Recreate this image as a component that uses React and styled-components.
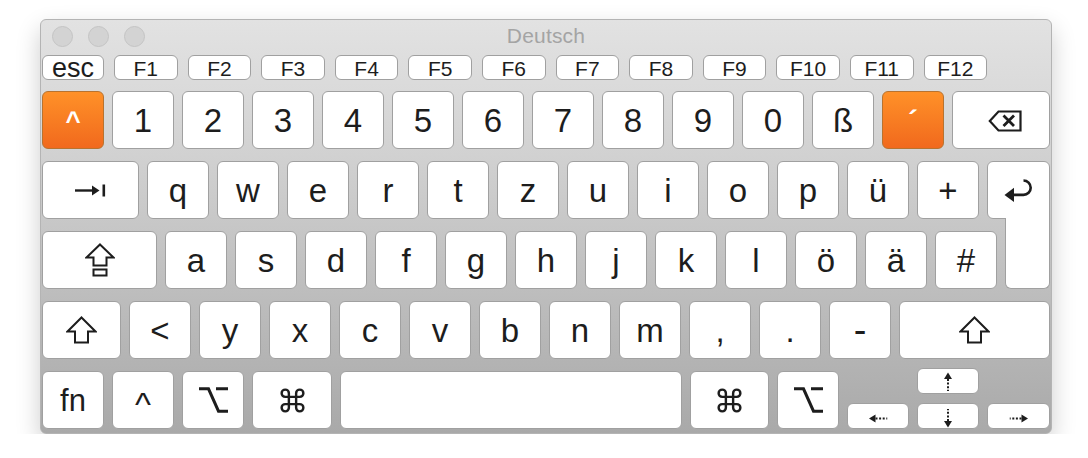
import React from 'react'
import styled, { createGlobalStyle } from 'styled-components'

const GlobalStyle = createGlobalStyle`
  body {
    margin: 0;
    background: #fff;
    font-family: "Liberation Sans", Arial, sans-serif;
  }
`

const Window = styled.div`
  margin: 19px 0 0 40px;
  width: 1012px;
  height: 415px;
  box-sizing: border-box;
  border: 1px solid #b4b4b4;
  border-radius: 6px;
  background: linear-gradient(#e2e2e2 0, #d9d9d9 80px, #a9a9a9 100%);
  box-shadow: 0 10px 24px rgba(0, 0, 0, 0.2);
`

const TitleBar = styled.div`
  height: 35px;
  box-sizing: border-box;
  padding-bottom: 3px;
  display: grid;
  grid-template-columns: 1fr auto 1fr;
  align-items: center;
`

const Lights = styled.div`
  display: flex;
  gap: 15px;
  padding-left: 11px;
`

const Light = styled.span`
  width: 21px;
  height: 21px;
  box-sizing: border-box;
  border-radius: 50%;
  background: #d3d3d3;
  border: 1px solid #c4c4c4;
`

const Title = styled.div`
  font-size: 21px;
  color: #a4a4a4;
  letter-spacing: 0.2px;
`

const Board = styled.div`
  padding: 0 1px;
  display: flex;
  flex-direction: column;
  gap: 12px;
`

const FRow = styled.div`
  display: flex;
  gap: 10px;
  height: 25px;
  margin-bottom: -1px;
`

const Row = styled.div`
  display: flex;
  gap: 8px;
  height: 58px;
`

const Key = styled.div`
  flex: 0 0 ${p => p.$w || 62}px;
  box-sizing: border-box;
  display: flex;
  align-items: center;
  justify-content: center;
  padding-top: ${p => p.$pt || 0}px;
  background: #fff;
  border: 1px solid #a0a0a0;
  border-radius: 6px;
  font-size: ${p => p.$fs || 33}px;
  line-height: 1;
  color: #1d1d1d;
`

const FKey = styled(Key)`
  padding-top: 1px;
`

const AccentKey = styled(Key)`
  background: linear-gradient(#ff9128, #f1691d);
  border-color: #b8732f;
  color: #fff;
  font-weight: bold;
`

const ReturnKey = styled(Key)`
  border-bottom-right-radius: 0;
`

const ReturnTail = styled.div`
  flex: 0 0 45px;
  box-sizing: border-box;
  height: 71px;
  margin-top: -13px;
  background: #fff;
  border: 1px solid #a0a0a0;
  border-top: none;
  border-radius: 0 0 6px 6px;
  position: relative;
  z-index: 1;
`

const Arrows = styled.div`
  flex: 0 0 203px;
  align-self: flex-end;
  height: 61px;
  display: grid;
  grid-template-columns: 62px 62px 63px;
  grid-template-rows: 26px 26px;
  column-gap: 8px;
  row-gap: 9px;
`

const ArrowKey = styled(Key)`
  grid-column: ${p => p.$col};
  grid-row: ${p => p.$row};
`

const ink = '#1d1d1d'

const BackspaceIcon = () => (
  <svg width="34" height="22" viewBox="0 0 34 22">
    <path d="M10.5 1.5H32.5V20.5H10.5L1.8 11Z" fill="none" stroke={ink} strokeWidth="2.2" strokeLinejoin="miter" />
    <path d="M15.5 5.5L26 16M26 5.5L15.5 16" stroke={ink} strokeWidth="2.8" />
  </svg>
)

const TabIcon = () => (
  <svg width="31" height="13" viewBox="0 0 31 13">
    <path d="M0 6.5H20" stroke={ink} strokeWidth="2.4" />
    <path d="M17 1.5L24.5 6.5L17 11.5Z" fill={ink} />
    <rect x="27.5" y="0.5" width="2.6" height="12" fill={ink} />
  </svg>
)

const CapsIcon = () => (
  <svg width="30" height="34" viewBox="0 0 30 34">
    <path d="M15 1.5L28.5 14.5H21.5V22.5H8.5V14.5H1.5Z" fill="none" stroke={ink} strokeWidth="2" strokeLinejoin="miter" />
    <rect x="8.5" y="26.5" width="13" height="6" fill="none" stroke={ink} strokeWidth="2" />
  </svg>
)

const ShiftIcon = () => (
  <svg width="31" height="28" viewBox="0 0 31 28">
    <path d="M15.5 1.5L29.5 15.5H22V26.5H9V15.5H1.5Z" fill="none" stroke={ink} strokeWidth="2" strokeLinejoin="miter" />
  </svg>
)

const ReturnIcon = () => (
  <svg width="30" height="24" viewBox="0 0 30 24">
    <path d="M19.5 2.5A7.2 7.2 0 0 1 19.5 16.9H8" fill="none" stroke={ink} strokeWidth="2.6" />
    <path d="M0.5 16.9L10 9.8V24Z" fill={ink} />
  </svg>
)

const OptionIcon = () => (
  <svg width="31" height="28" viewBox="0 0 31 28">
    <path d="M1 2.8H10.5L20.5 25.2H30M18 2.8H30" fill="none" stroke={ink} strokeWidth="3" />
  </svg>
)

const CommandIcon = () => (
  <svg width="29" height="29" viewBox="0 0 24 24">
    <path
      d="M15 6v12a3 3 0 1 0 3-3H6a3 3 0 1 0 3 3V6a3 3 0 1 0-3 3h12a3 3 0 1 0-3-3"
      fill="none"
      stroke={ink}
      strokeWidth="2"
    />
  </svg>
)

const DotArrow = ({ rotate }) => (
  <svg width="10" height="19" viewBox="0 0 10 19" style={{ transform: `rotate(${rotate}deg)` }}>
    <path d="M1 7L5 0.5L9 7Z" fill={ink} />
    <path d="M5 7V19" stroke={ink} strokeWidth="2" strokeDasharray="2 1.6" />
  </svg>
)

const fKeys = ['F1', 'F2', 'F3', 'F4', 'F5', 'F6', 'F7', 'F8', 'F9', 'F10', 'F11', 'F12']
const numKeys = ['1', '2', '3', '4', '5', '6', '7', '8', '9', '0', 'ß']
const qRow = ['q', 'w', 'e', 'r', 't', 'z', 'u', 'i', 'o', 'p', 'ü', '+']
const aRow = ['a', 's', 'd', 'f', 'g', 'h', 'j', 'k', 'l', 'ö', 'ä', '#']
const yRow = ['<', 'y', 'x', 'c', 'v', 'b', 'n', 'm', ',', '.', '-']

export default function App() {
  return (
    <>
      <GlobalStyle />
      <Window>
        <TitleBar>
          <Lights>
            <Light />
            <Light />
            <Light />
          </Lights>
          <Title>Deutsch</Title>
          <div />
        </TitleBar>
        <Board>
          <FRow>
            <FKey $w={62} $fs={27}>esc</FKey>
            {fKeys.map(k => (
              <FKey key={k} $w={63.6} $fs={21}>{k}</FKey>
            ))}
          </FRow>
          <Row>
            <AccentKey $fs={26} $pt={2}>^</AccentKey>
            {numKeys.map(k => (
              <Key key={k}>{k}</Key>
            ))}
            <AccentKey $fs={30} $pt={2}>´</AccentKey>
            <Key $w={98} $pt={2} style={{ paddingLeft: 7 }}><BackspaceIcon /></Key>
          </Row>
          <Row>
            <Key $w={97}><TabIcon /></Key>
            {qRow.map(k => (
              <Key key={k}>{k}</Key>
            ))}
            <ReturnKey $w={63}><ReturnIcon /></ReturnKey>
          </Row>
          <Row>
            <Key $w={115}><CapsIcon /></Key>
            {aRow.map(k => (
              <Key key={k}>{k}</Key>
            ))}
            <ReturnTail />
          </Row>
          <Row>
            <Key $w={79}><ShiftIcon /></Key>
            {yRow.map(k => (
              <Key key={k} $fs={k === '-' ? 38 : 33}>{k}</Key>
            ))}
            <Key $w={151}><ShiftIcon /></Key>
          </Row>
          <Row>
            <Key $fs={31}>fn</Key>
            <Key $fs={34} $pt={8}>^</Key>
            <Key><OptionIcon /></Key>
            <Key $w={80}><CommandIcon /></Key>
            <Key $w={342} />
            <Key $w={79}><CommandIcon /></Key>
            <Key><OptionIcon /></Key>
            <Arrows>
              <ArrowKey $col={2} $row={1}><DotArrow rotate={0} /></ArrowKey>
              <ArrowKey $col={1} $row={2} $pt={4}><DotArrow rotate={-90} /></ArrowKey>
              <ArrowKey $col={2} $row={2} $pt={4}><DotArrow rotate={180} /></ArrowKey>
              <ArrowKey $col={3} $row={2} $pt={4}><DotArrow rotate={90} /></ArrowKey>
            </Arrows>
          </Row>
        </Board>
      </Window>
    </>
  )
}
